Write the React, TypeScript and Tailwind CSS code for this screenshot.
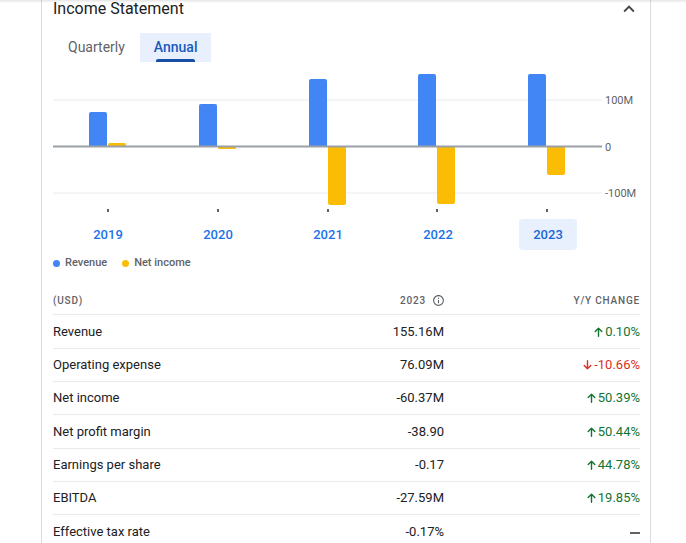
import React from "react";

const years = ["2019", "2020", "2021", "2022", "2023"];

const bars = [
  { x: 36, rev: 50, ni: 81, niNeg: false },
  { x: 146, rev: 42, ni: 87, niNeg: true },
  { x: 256, rev: 17, ni: 143, niNeg: true },
  { x: 365, rev: 12, ni: 142, niNeg: true },
  { x: 475, rev: 12, ni: 113, niNeg: true },
];

const ZERO = 84.5;

function Bar({ x, top, bottom, color, up }: { x: number; top: number; bottom: number; color: string; up: boolean }) {
  const h = bottom - top;
  const r = Math.min(2, h / 2);
  const w = 18;
  const d = up
    ? `M${x} ${bottom} V${top + r} Q${x} ${top} ${x + r} ${top} H${x + w - r} Q${x + w} ${top} ${x + w} ${top + r} V${bottom} Z`
    : `M${x} ${top} V${bottom - r} Q${x} ${bottom} ${x + r} ${bottom} H${x + w - r} Q${x + w} ${bottom} ${x + w} ${bottom - r} V${top} Z`;
  return <path d={d} fill={color} />;
}

function ArrowUp({ color }: { color: string }) {
  return (
    <svg width="9" height="10" viewBox="0 0 9 10" fill="none" stroke={color} strokeWidth="1.4" strokeLinecap="round" strokeLinejoin="round">
      <path d="M4.5 9.3V1.2M1.2 4.5L4.5 1.2L7.8 4.5" />
    </svg>
  );
}

function ArrowDown({ color }: { color: string }) {
  return (
    <svg width="9" height="10" viewBox="0 0 9 10" fill="none" stroke={color} strokeWidth="1.4" strokeLinecap="round" strokeLinejoin="round">
      <path d="M4.5 0.7V8.8M1.2 5.5L4.5 8.8L7.8 5.5" />
    </svg>
  );
}

const rows = [
  { label: "Revenue", value: "155.16M", change: "0.10%", dir: "up", h: "h-[34px]" },
  { label: "Operating expense", value: "76.09M", change: "-10.66%", dir: "down", h: "h-[33px]" },
  { label: "Net income", value: "-60.37M", change: "50.39%", dir: "up", h: "h-[33px]" },
  { label: "Net profit margin", value: "-38.90", change: "50.44%", dir: "up", h: "h-[34px]" },
  { label: "Earnings per share", value: "-0.17", change: "44.78%", dir: "up", h: "h-[33px]" },
  { label: "EBITDA", value: "-27.59M", change: "19.85%", dir: "up", h: "h-[33px]" },
  { label: "Effective tax rate", value: "-0.17%", change: "", dir: "none", h: "h-[34px]" },
];

export default function App() {
  return (
    <div
      className="relative w-[686px] h-[543px] overflow-hidden bg-white"
      style={{ fontFamily: "Roboto, 'Noto Sans', Arial, sans-serif" }}
    >
      <div className="pointer-events-none absolute left-0 top-0 h-[3px] w-full bg-gradient-to-b from-black/10 to-transparent" />
      <div className="ml-[41px] w-[610px] h-[543px] border-l border-r border-[#dadce0] pl-[11px] pr-[10px]">
        {/* Title */}
        <div className="flex h-[18px] items-center justify-between">
          <div className="text-[16px] leading-[18px] text-[#202124]">Income Statement</div>
          <svg width="22" height="22" viewBox="0 0 24 24" fill="#444746" className="-mt-[1px]">
            <path d="M12 8l-6 6 1.41 1.41L12 10.83l4.59 4.58L18 14z" />
          </svg>
        </div>

        {/* Tabs */}
        <div className="mt-[15px] flex h-[29px]">
          <div className="flex h-full items-center px-[15px] text-[14px] text-[#5f6368]">Quarterly</div>
          <div className="relative flex h-full items-center bg-[#e8f0fe] px-[14px] text-[14px] font-medium text-[#185abc]">
            Annual
            <div className="absolute bottom-0 left-[16px] right-[16px] h-[3px] rounded-t-[2px] bg-[#174ea6]" />
          </div>
        </div>

        {/* Chart */}
        <svg width="586" height="155" className="block">
          <line x1="0" x2="549" y1="38" y2="38" stroke="#e8eaed" strokeWidth="1" />
          <line x1="0" x2="549" y1="131" y2="131" stroke="#e8eaed" strokeWidth="1" />
          {bars.map((b, i) => (
            <g key={i}>
              <Bar x={b.x} top={b.rev} bottom={ZERO} color="#4285f4" up />
              {b.niNeg ? (
                <Bar x={b.x + 19} top={ZERO} bottom={b.ni} color="#fbbc04" up={false} />
              ) : (
                <Bar x={b.x + 19} top={b.ni} bottom={ZERO} color="#fbbc04" up />
              )}
              <rect x={b.x + 18} y="147" width="2" height="3" fill="#5f6368" />
            </g>
          ))}
          <line x1="0" x2="549" y1={ZERO} y2={ZERO} stroke="#9aa0a6" strokeWidth="2" />
          <text x="552" y="42" fontSize="11" fill="#5f6368">100M</text>
          <text x="552" y="88.5" fontSize="11" fill="#5f6368">0</text>
          <text x="552" y="135" fontSize="11" fill="#5f6368">-100M</text>
        </svg>

        {/* Years */}
        <div className="mt-[2px] flex h-[31px] gap-[52px] pl-[26px]">
          {years.map((y) => (
            <div
              key={y}
              className={
                y === "2023"
                  ? "flex h-[31px] w-[58px] items-center justify-center rounded-[4px] bg-[#e8f0fe] text-[13px] font-medium text-[#1967d2]"
                  : "flex h-[31px] w-[58px] items-center justify-center text-[13px] font-medium text-[#1a73e8]"
              }
            >
              {y}
            </div>
          ))}
        </div>

        {/* Legend */}
        <div className="mt-[6px] flex h-[14px] items-center text-[11px] font-medium leading-[14px] text-[#5f6368]">
          <span className="h-[7px] w-[7px] rounded-full bg-[#4285f4]" />
          <span className="ml-[5px]">Revenue</span>
          <span className="ml-[15px] h-[7px] w-[7px] rounded-full bg-[#fbbc04]" />
          <span className="ml-[5px]">Net income</span>
        </div>

        {/* Table header */}
        <div className="mt-[16px] flex h-[28px] items-center text-[10px] font-medium tracking-[0.8px] text-[#5f6368]">
          <div className="flex-1">(USD)</div>
          <div className="flex w-[120px] items-center justify-end gap-[6px]">
            <span>2023</span>
            <svg width="13" height="13" viewBox="0 0 24 24" fill="#5f6368" className="-mr-[1px]">
              <path d="M11 7h2v2h-2zm0 4h2v6h-2zm1-9C6.48 2 2 6.48 2 12s4.48 10 10 10 10-4.48 10-10S17.52 2 12 2zm0 18c-4.41 0-8-3.59-8-8s3.59-8 8-8 8 3.59 8 8-3.59 8-8 8z" />
            </svg>
          </div>
          <div className="w-[196px] text-right">Y/Y CHANGE</div>
        </div>

        {/* Rows */}
        {rows.map((r) => (
          <div key={r.label} className={`flex ${r.h} items-center border-t border-[#e8eaed] text-[13px]`}>
            <div className="flex-1 text-[#202124]">{r.label}</div>
            <div className="w-[120px] text-right text-[#202124]">{r.value}</div>
            <div className="flex w-[196px] items-center justify-end">
              {r.dir === "up" && (
                <span className="flex items-center gap-[2px] text-[#137333]">
                  <ArrowUp color="#137333" />
                  {r.change}
                </span>
              )}
              {r.dir === "down" && (
                <span className="flex items-center gap-[2px] text-[#d93025]">
                  <ArrowDown color="#d93025" />
                  {r.change}
                </span>
              )}
              {r.dir === "none" && <span className="mt-[2px] h-[2px] w-[10px] bg-[#5f6368]" />}
            </div>
          </div>
        ))}
      </div>
    </div>
  );
}
